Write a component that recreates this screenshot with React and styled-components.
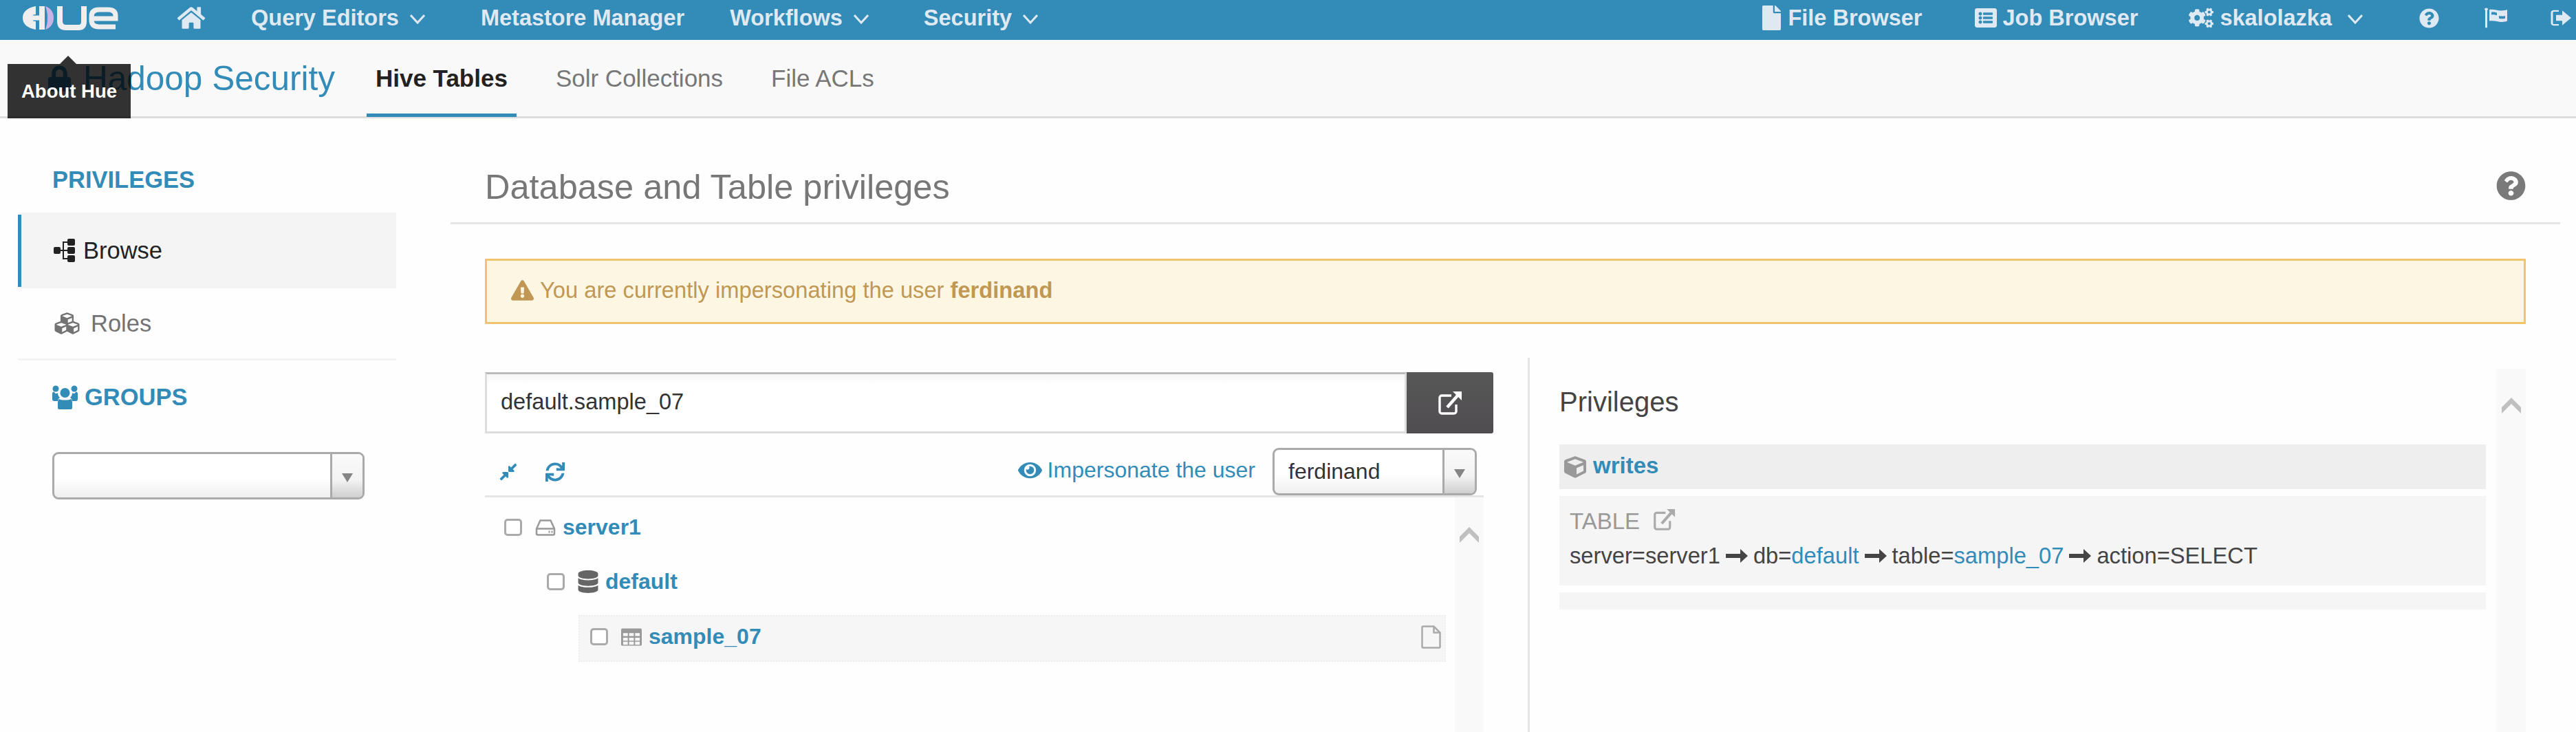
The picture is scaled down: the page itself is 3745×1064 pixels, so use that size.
import React from 'react';
import styled, { createGlobalStyle } from 'styled-components';
import {
  FaHome, FaFile, FaListAlt, FaCogs, FaQuestionCircle, FaLock, FaCubes,
  FaCompressAlt, FaSync, FaEye, FaExclamationTriangle, FaDatabase, FaCube,
} from 'react-icons/fa';

const BLUE = '#338bb8';

const Global = createGlobalStyle`
  html, body { margin: 0; padding: 0; background: #fefefe; }
  body { font-family: "Liberation Sans", Arial, sans-serif; font-size: 33px; color: #444; }
  * { box-sizing: border-box; }
`;

const Page = styled.div`
  position: relative;
  width: 3745px;
  height: 1064px;
  overflow: hidden;
`;

const TopBar = styled.header`
  display: flex;
  align-items: center;
  height: 58px;
  background: ${BLUE};
  color: #dfe9f2;
  font-weight: 700;
  font-size: 32.5px;
  padding: 0 7px 6px 33px;
`;

const NavItem = styled.div`
  display: flex;
  align-items: center;
  margin-left: ${p => p.$ml || 0}px;
  white-space: nowrap;
`;

const NavIcon = styled.span`
  display: inline-flex;
  margin-right: ${p => p.$mr || 0}px;
  svg { width: ${p => p.$w}px; height: ${p => p.$h || p.$w}px; display: block; }
`;

const Chevron = styled.svg`
  width: 22px;
  height: 14px;
  margin-left: ${p => p.$ml || 16}px;
  margin-top: 3px;
  fill: none;
  stroke: #dfe9f2;
  stroke-width: 3;
`;

const Spacer = styled.div`
  flex: 1;
`;

const SubNav = styled.nav`
  display: flex;
  align-items: stretch;
  height: 114px;
  background: #f9f9f9;
  border-bottom: 3px solid #ddd;
  padding-left: 70px;
`;

const AppTitle = styled.div`
  display: flex;
  align-items: center;
  color: ${BLUE};
  font-size: 49.5px;
  white-space: nowrap;
  svg { width: 33px; height: 40px; margin-right: 18px; }
`;

const Tab = styled.div`
  display: flex;
  align-items: center;
  padding: 4px 13px 0;
  margin-left: ${p => p.$ml}px;
  height: 112px;
  font-size: 35px;
  white-space: nowrap;
  font-weight: ${p => (p.$active ? 700 : 400)};
  color: ${p => (p.$active ? '#222' : '#777')};
  border-bottom: 5px solid ${p => (p.$active ? BLUE : 'transparent')};
`;

const Tooltip = styled.div`
  position: absolute;
  left: 11px;
  top: 93px;
  width: 179px;
  height: 79px;
  background: rgba(0, 0, 0, 0.8);
  color: #fff;
  font-weight: 700;
  font-size: 27.5px;
  display: flex;
  align-items: center;
  justify-content: center;
  &::before {
    content: '';
    position: absolute;
    left: 76px;
    top: -12px;
    border-left: 12px solid transparent;
    border-right: 12px solid transparent;
    border-bottom: 12px solid rgba(0, 0, 0, 0.8);
  }
`;

const Body = styled.div`
  display: flex;
  align-items: flex-start;
`;

const Sidebar = styled.aside`
  width: 550px;
  margin-left: 26px;
  flex: none;
`;

const SideTitle = styled.div`
  display: flex;
  align-items: center;
  height: ${p => p.$h}px;
  padding-top: ${p => p.$pt || 0}px;
  padding-left: 50px;
  color: ${BLUE};
  font-weight: 700;
  font-size: 34.5px;
  svg { width: 37px; height: 35px; margin-right: 10px; }
`;

const SideRow = styled.div`
  display: flex;
  align-items: center;
  height: ${p => (p.$active ? 110 : 105)}px;
  padding-left: 50px;
  font-size: 34.5px;
  color: ${p => (p.$active ? '#222' : '#737373')};
  background: ${p => (p.$active
    ? `linear-gradient(${BLUE}, ${BLUE}) left center / 5px 105px no-repeat, #f4f4f4`
    : 'transparent')};
  border-bottom: ${p => (p.$active ? 'none' : '3px solid #f4f4f4')};
`;

const SideIcon = styled.span`
  display: inline-flex;
  margin-right: ${p => p.$mr}px;
  margin-left: ${p => p.$ml || 0}px;
  svg { width: ${p => p.$w}px; height: ${p => p.$h}px; display: block; }
`;

const Select = styled.div`
  display: flex;
  align-items: stretch;
  flex: none;
  width: ${p => p.$w}px;
  height: ${p => p.$h}px;
  margin-left: ${p => p.$ml || 0}px;
  margin-right: ${p => p.$mr || 0}px;
  margin-top: ${p => p.$mt || 0}px;
  border: 3px solid #aaa;
  border-radius: 9px;
  overflow: hidden;
  background: linear-gradient(#fff 55%, #efefef);
  font-size: 32px;
  color: #333;
`;

const SelectValue = styled.div`
  flex: 1;
  display: flex;
  align-items: center;
  padding-left: 20px;
`;

const SelectArrow = styled.div`
  width: 47px;
  display: flex;
  align-items: center;
  justify-content: center;
  padding-top: 6px;
  border-left: 3px solid #aaa;
  background: linear-gradient(#fafafa, #f3f3f3 60%, #cfcfcf);
  &::after {
    content: '';
    border-left: 8px solid transparent;
    border-right: 8px solid transparent;
    border-top: 13px solid #858585;
  }
`;

const Main = styled.main`
  width: 3067px;
  margin-left: 79px;
  flex: none;
`;

const Header = styled.div`
  display: flex;
  align-items: center;
  justify-content: space-between;
  height: 154px;
  padding: 48px 50px 0 50px;
  border-bottom: 3px solid #e5e5e5;
`;

const Heading = styled.h2`
  margin: 0;
  font-weight: 400;
  font-size: 50.5px;
  color: #777;
`;

const HelpIcon = styled.span`
  display: inline-flex;
  margin-top: -3px;
  color: #7a7a7a;
  svg { width: 43px; height: 44px; }
`;

const Content = styled.div`
  padding: 50px 50px 0;
`;

const Alert = styled.div`
  display: flex;
  align-items: center;
  height: 95px;
  padding: 0 0 3px 35px;
  border: 3px solid #f0c36d;
  background: #fdf6e3;
  color: #c09853;
  font-size: 32.7px;
  b { margin-left: 9px; }
  svg { width: 33px; height: 32px; margin-right: 9px; }
`;

const Panels = styled.div`
  display: flex;
  height: 544px;
  margin-top: 49px;
`;

const LeftPanel = styled.section`
  width: 1466px;
  flex: none;
  padding-top: 21px;
  display: flex;
  flex-direction: column;
`;

const SearchRow = styled.div`
  display: flex;
  height: 89px;
  flex: none;
`;

const SearchInput = styled.div`
  flex: 1;
  display: flex;
  align-items: center;
  padding: 0 0 3px 20px;
  border: 3px solid #ddd;
  border-top-color: #bbb;
  background: linear-gradient(#f6f6f6, #fff 14px);
  font-size: 32.6px;
  color: #333;
`;

const SearchButton = styled.div`
  width: 126px;
  display: flex;
  align-items: center;
  justify-content: center;
  background: linear-gradient(#585858, #504d50);
  border-radius: 0 3px 3px 0;
`;

const External = ({ size, color }) => (
  <svg width={size} height={size} viewBox="0 0 36 36" fill="none" stroke={color} strokeWidth="3.4">
    <path d="M20 7H6a3 3 0 0 0-3 3v20a3 3 0 0 0 3 3h18a3 3 0 0 0 3-3V20" />
    <path d="M14 24L29 7" strokeWidth="4.5" />
    <path d="M22 1h13v13z" fill={color} stroke="none" />
  </svg>
);

const Toolbar = styled.div`
  display: flex;
  align-items: center;
  flex: none;
  width: 1452px;
  height: 93px;
  border-bottom: 3px solid #e5e5e5;
  padding: 21px 0 0 20px;
`;

const ToolIcon = styled.span`
  display: inline-flex;
  color: ${BLUE};
  margin-right: ${p => p.$mr}px;
  svg { width: ${p => p.$w}px; height: ${p => p.$h}px; }
`;

const Impersonate = styled.div`
  display: flex;
  align-items: center;
  margin-left: auto;
  margin-right: 25px;
  margin-top: -5px;
  color: ${BLUE};
  font-size: 32px;
`;

const TreeWrap = styled.div`
  display: flex;
  flex: 1;
  width: 1452px;
`;

const Tree = styled.div`
  width: 1410px;
  flex: none;
`;

const ScrollTrack = styled.div`
  flex: none;
  width: ${p => p.$w}px;
  margin-top: ${p => p.$mt || 0}px;
  padding-top: ${p => p.$pt}px;
  background: #f9f9f9;
  display: flex;
  justify-content: center;
  align-items: flex-start;
`;

const ScrollUp = styled.svg`
  width: 28px;
  height: 23px;
  fill: #c0c0c0;
`;

const TreeRow = styled.div`
  display: flex;
  align-items: center;
  height: ${p => p.$h}px;
  margin-left: ${p => (p.$box ? p.$indent : 0)}px;
  width: ${p => (p.$box ? '1261px' : 'auto')};
  margin-top: ${p => (p.$box ? 14 : 0)}px;
  padding-left: ${p => (p.$box ? 15 : p.$indent)}px;
  padding-right: 5px;
  padding-bottom: ${p => (p.$box ? 5 : 0)}px;
  background: ${p => (p.$box ? '#f6f6f6' : 'transparent')};
  border: ${p => (p.$box ? '2px dotted #eee' : 'none')};
`;

const Check = styled.span`
  width: 26px;
  height: 25px;
  flex: none;
  border: 3px solid #aaa;
  border-radius: 5px;
  background: #fff;
  margin-right: 19px;
`;

const TreeIcon = styled.span`
  display: inline-flex;
  color: ${p => p.$c};
  width: 30px;
  justify-content: center;
  margin-right: 10px;
  svg { width: 30px; height: ${p => p.$h}px; }
`;

const TreeLink = styled.span`
  color: ${BLUE};
  font-weight: 700;
  font-size: 32px;
`;

const RowEnd = styled.span`
  display: inline-flex;
  margin-left: auto;
`;

const VDivider = styled.div`
  width: 3px;
  margin-left: 50px;
  background: #e5e5e5;
  flex: none;
`;

const RightPanel = styled.section`
  display: flex;
  flex: 1;
  padding-left: 43px;
`;

const RightColumn = styled.div`
  width: 1347px;
  margin-right: 15px;
  flex: none;
`;

const RightTitle = styled.h3`
  display: flex;
  align-items: center;
  height: 126px;
  margin: 0;
  padding-top: 3px;
  font-weight: 400;
  font-size: 40px;
  color: #444;
`;

const WriteRow = styled.div`
  display: flex;
  align-items: center;
  height: 65px;
  padding: 0 0 4px 7px;
  background: #eee;
  color: ${BLUE};
  font-weight: 700;
  font-size: 33px;
  svg { width: 32px; height: 32px; color: #999; margin-right: 10px; margin-top: 4px; }
`;

const PrivBox = styled.div`
  height: ${p => p.$h}px;
  margin-top: 10px;
  padding: 15px 15px 0;
  background: #f5f5f5;
`;

const PrivType = styled.div`
  display: flex;
  align-items: center;
  height: 44px;
  color: #999;
  font-size: 33px;
  svg { margin-left: 19px; margin-top: -6px; }
`;

const PrivLine = styled.div`
  display: flex;
  align-items: center;
  height: 52px;
  margin-top: 2px;
  color: #444;
  font-size: 32.7px;
  white-space: pre;
  a { color: ${BLUE}; }
`;

const ArrowGlyph = styled.svg`
  width: 32px;
  height: 20px;
  margin: 0 8px;
  fill: #444;
`;

const Arrow = () => (
  <ArrowGlyph viewBox="0 0 32 20"><path d="M0 7h21V0l11 10-11 10v-7H0z" /></ArrowGlyph>
);

const Logo = () => (
  <svg width="139" height="36" viewBox="0 0 139 36" style={{ display: 'block' }}>
    <path d="M19 1C7 3 0 9 0 18s7 15 19 17V23c-4 0-5-1-5-5s1-5 5-5z" fill="#eeeeee" />
    <rect x="14" y="14.5" width="12" height="7" fill="#eeeeee" />
    <rect x="24" y="1" width="8" height="34" fill="#eeeeee" />
    <path d="M33 1c8 3 12 9 12 17s-4 14-12 17c2-5 3-11 3-17s-1-12-3-17z" fill="#c9b3e6" />
    <path d="M54 1v22q0 9 9 9h18q8 0 8-9V1" fill="none" stroke="#eeeeee" strokeWidth="8" />
    <path d="M135 31h-24q-11 0-11-10v-5q0-10 11-10h13q11 0 11 9v4h-35" fill="none" stroke="#eeeeee" strokeWidth="7" />
  </svg>
);

const Flag = () => (
  <svg viewBox="0 0 33 40" preserveAspectRatio="none" fill="#dfe9f2">
    <circle cx="2.5" cy="3" r="2.5" />
    <rect x="1" y="3" width="3" height="36" />
    <path d="M7 4c8-2 15 5 26 0v22c-10 5-17-2-26 0z" />
    <path d="M10 9c3-1 6 0 8 1v5c-3-1-5-2-8-1zM21 16c3 1 6 1 9 0v5c-3 1-6 1-9 0z" fill={BLUE} />
  </svg>
);

const SignOut = () => (
  <svg viewBox="0 0 30 36" preserveAspectRatio="none">
    <path d="M12 4H5a3 3 0 0 0-3 3v22a3 3 0 0 0 3 3h7" fill="none" stroke="#dfe9f2" strokeWidth="3" />
    <path d="M8 12h9V3l13 15-13 15v-9H8z" fill="#dfe9f2" />
  </svg>
);

const Sitemap = () => (
  <svg viewBox="0 0 31 34" fill="#222">
    <rect x="0" y="12" width="10" height="10" rx="2" />
    <rect x="20" y="0" width="11" height="10" rx="2" />
    <rect x="20" y="12" width="11" height="10" rx="2" />
    <rect x="20" y="24" width="11" height="10" rx="2" />
    <path d="M10 16h3V4h7v2h-5v10h5v2h-5v10h5v2h-7V18h-3z" />
  </svg>
);

const Users = () => (
  <svg viewBox="0 0 37 35" fill={BLUE}>
    <circle cx="18.5" cy="11" r="7" />
    <circle cx="5" cy="5" r="4.5" />
    <circle cx="32" cy="5" r="4.5" />
    <path d="M0 12c0-2 2-3 3-2 1 2 3 3 5 1 0 4 2 6 3 7-2 1-3 3-3 5H3c-2 0-3-1-3-3z" />
    <path d="M37 12c0-2-2-3-3-2-1 2-3 3-5 1 0 4-2 6-3 7 2 1 3 3 3 5h5c2 0 3-1 3-3z" />
    <path d="M10 20c2 2 15 2 17 0 2 1 2 4 2 7v6c0 1-1 2-2 2H10c-1 0-2-1-2-2v-6c0-3 0-6 2-7z" />
  </svg>
);

const Hdd = () => (
  <svg viewBox="0 0 29 24" fill="none" stroke="#999" strokeWidth="2.5">
    <path d="M7 1.5h15l5.5 12v7a2 2 0 0 1-2 2h-22a2 2 0 0 1-2-2v-7z" />
    <path d="M1.5 13.5h26" />
    <path d="M19 18h2M23 18h2" strokeWidth="3" />
  </svg>
);

const TableGrid = () => (
  <svg viewBox="0 0 31 26">
    <rect width="31" height="26" rx="2" fill="#999" />
    <g fill="#f6f6f6">
      {[7, 14, 20].map(y => [3, 12, 21].map(x => (
        <rect key={`${x}-${y}`} x={x} y={y} width="7" height="4.5" />
      )))}
    </g>
  </svg>
);

const FileOutline = () => (
  <svg width="29" height="34" viewBox="0 0 29 34" fill="none" stroke="#aaa" strokeWidth="2.5">
    <path d="M1.5 2.5a1 1 0 0 1 1-1h16l9 9v21a1 1 0 0 1-1 1h-24a1 1 0 0 1-1-1z" />
    <path d="M18.5 1.5v9h9" />
  </svg>
);

const Down = ({ ml }) => (
  <Chevron $ml={ml} viewBox="0 0 22 14"><path d="M1 1l10 11L21 1" /></Chevron>
);

const UpArrow = () => (
  <ScrollUp viewBox="0 0 28 23"><path d="M14 0l14 14v9L14 9 0 23v-9z" /></ScrollUp>
);

export default function App() {
  return (
    <Page>
      <Global />
      <TopBar>
        <Logo />
        <NavItem $ml={84}><NavIcon $w={44} $h={36}><FaHome /></NavIcon></NavItem>
        <NavItem $ml={65}>Query Editors<Down /></NavItem>
        <NavItem $ml={81}>Metastore Manager</NavItem>
        <NavItem $ml={66}>Workflows<Down /></NavItem>
        <NavItem $ml={80}>Security<Down /></NavItem>
        <Spacer />
        <NavItem><NavIcon $w={27} $h={36} $mr={10}><FaFile /></NavIcon>File Browser</NavItem>
        <NavItem $ml={75}><NavIcon $w={34} $h={32} $mr={8}><FaListAlt /></NavIcon>Job Browser</NavItem>
        <NavItem $ml={74}><NavIcon $w={36} $h={32} $mr={9}><FaCogs /></NavIcon>skalolazka<Down ml={23} /></NavItem>
        <NavItem $ml={82}><NavIcon $w={29} $h={29}><FaQuestionCircle /></NavIcon></NavItem>
        <NavItem $ml={66}><NavIcon $w={33} $h={30}><Flag /></NavIcon></NavItem>
        <NavItem $ml={63}><NavIcon $w={30} $h={26}><SignOut /></NavIcon></NavItem>
      </TopBar>

      <SubNav>
        <AppTitle><FaLock />Hadoop Security</AppTitle>
        <Tab $active $ml={46}>Hive Tables</Tab>
        <Tab $ml={44}>Solr Collections</Tab>
        <Tab $ml={44}>File ACLs</Tab>
      </SubNav>

      <Tooltip>About Hue</Tooltip>

      <Body>
        <Sidebar>
          <SideTitle $h={137} $pt={42}>PRIVILEGES</SideTitle>
          <SideRow $active>
            <SideIcon $w={31} $h={34} $mr={12} $ml={2}><Sitemap /></SideIcon>
            Browse
          </SideRow>
          <SideRow>
            <SideIcon $w={43} $h={36} $mr={13}><FaCubes /></SideIcon>
            Roles
          </SideRow>
          <SideTitle $h={106}><Users />GROUPS</SideTitle>
          <Select $w={454} $h={69} $ml={50} $mt={27}>
            <SelectValue />
            <SelectArrow />
          </Select>
        </Sidebar>

        <Main>
          <Header>
            <Heading>Database and Table privileges</Heading>
            <HelpIcon><FaQuestionCircle /></HelpIcon>
          </Header>
          <Content>
            <Alert>
              <FaExclamationTriangle />
              You are currently impersonating the user <b>ferdinand</b>
            </Alert>
            <Panels>
              <LeftPanel>
                <SearchRow>
                  <SearchInput>default.sample_07</SearchInput>
                  <SearchButton><External size={36} color="#fff" /></SearchButton>
                </SearchRow>
                <Toolbar>
                  <ToolIcon $w={28} $h={28} $mr={39}><FaCompressAlt /></ToolIcon>
                  <ToolIcon $w={30} $h={28} $mr={0}><FaSync /></ToolIcon>
                  <Impersonate>
                    <ToolIcon $w={35} $h={31} $mr={8}><FaEye /></ToolIcon>
                    Impersonate the user
                  </Impersonate>
                  <Select $w={297} $h={69} $mr={10}>
                    <SelectValue>ferdinand</SelectValue>
                    <SelectArrow />
                  </Select>
                </Toolbar>
                <TreeWrap>
                  <Tree>
                    <TreeRow $h={87} $indent={28}>
                      <Check />
                      <TreeIcon $h={24}><Hdd /></TreeIcon>
                      <TreeLink>server1</TreeLink>
                    </TreeRow>
                    <TreeRow $h={70} $indent={90}>
                      <Check />
                      <TreeIcon $c="#666" $h={33}><FaDatabase /></TreeIcon>
                      <TreeLink>default</TreeLink>
                    </TreeRow>
                    <TreeRow $h={68} $indent={136} $box>
                      <Check />
                      <TreeIcon $h={26}><TableGrid /></TreeIcon>
                      <TreeLink>sample_07</TreeLink>
                      <RowEnd><FileOutline /></RowEnd>
                    </TreeRow>
                  </Tree>
                  <ScrollTrack $w={42} $pt={43}><UpArrow /></ScrollTrack>
                </TreeWrap>
              </LeftPanel>
              <VDivider />
              <RightPanel>
                <RightColumn>
                  <RightTitle>Privileges</RightTitle>
                  <WriteRow><FaCube />writes</WriteRow>
                  <PrivBox $h={130}>
                    <PrivType>TABLE <External size={33} color="#aaa" /></PrivType>
                    <PrivLine>
                      server=server1<Arrow />db=<a>default</a><Arrow />table=<a>sample_07</a><Arrow />action=SELECT
                    </PrivLine>
                  </PrivBox>
                  <PrivBox $h={25} />
                </RightColumn>
                <ScrollTrack $w={43} $mt={16} $pt={42}><UpArrow /></ScrollTrack>
              </RightPanel>
            </Panels>
          </Content>
        </Main>
      </Body>
    </Page>
  );
}
